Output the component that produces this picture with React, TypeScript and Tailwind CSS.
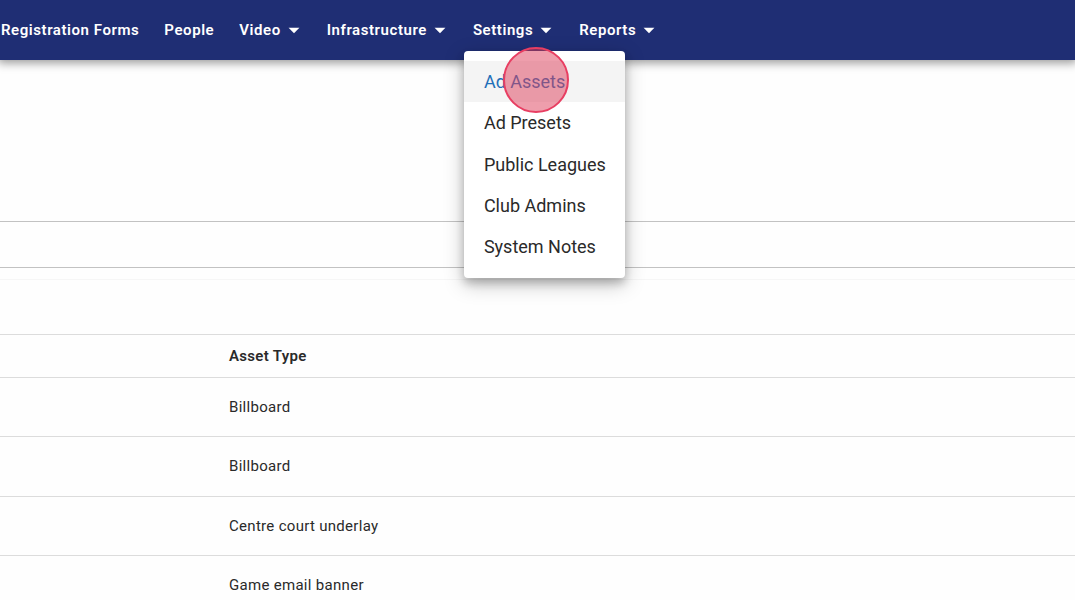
import { MdArrowDropDown } from "react-icons/md";

const navItems = [
    { label: "Registration Forms", menu: false },
    { label: "People", menu: false },
    { label: "Video", menu: true },
    { label: "Infrastructure", menu: true },
    { label: "Settings", menu: true },
    { label: "Reports", menu: true },
];

const settingsItems = ["Ad Assets", "Ad Presets", "Public Leagues", "Club Admins", "System Notes"];

const assets = ["Billboard", "Billboard", "Centre court underlay", "Game email banner"];

function SettingsMenu() {
    return (
        <ul className="absolute top-[51px] -left-[9px] z-20 flex h-[227px] w-[161px] flex-col rounded bg-white py-[10px] text-lg font-normal tracking-normal shadow-[0_5px_8px_rgba(0,0,0,0.2),0_6px_20px_rgba(0,0,0,0.25)]">
            {settingsItems.map((item, i) => (
                <li key={item} className="relative flex flex-1">
                    <a
                        href="#"
                        className={`flex flex-1 items-center px-5 whitespace-nowrap ${
                            i === 0 ? "bg-[#f4f4f4] text-[#1f6fb8]" : "text-[#2a2a2a]"
                        }`}
                    >
                        {item}
                    </a>
                    {/* Click marker */}
                    {i === 0 && (
                        <span className="pointer-events-none absolute -top-[14px] left-[39px] size-[66px] rounded-full border-2 border-[#e83e62] bg-[#dd3d5a]/50" />
                    )}
                </li>
            ))}
        </ul>
    );
}

function NavBar() {
    return (
        <header className="relative z-10 bg-[#1f2e74] shadow-[0_1px_9px_2px_rgba(0,0,0,0.4)]">
            <nav>
                <ul className="flex h-[60px] gap-[25px] pl-px text-[15px] font-semibold tracking-[0.0375em] text-white">
                    {navItems.map(({ label, menu }) => (
                        <li key={label} className="relative flex items-center">
                            {menu ? (
                                <button className="-mr-[5px] flex items-center whitespace-nowrap">
                                    {label}
                                    <MdArrowDropDown className="size-[26px]" />
                                </button>
                            ) : (
                                <a href="#" className="whitespace-nowrap">
                                    {label}
                                </a>
                            )}
                            {label === "Settings" && <SettingsMenu />}
                        </li>
                    ))}
                </ul>
            </nav>
        </header>
    );
}

export default function App() {
    return (
        <div className="min-h-screen overflow-hidden bg-[#fefefe] font-['Roboto',sans-serif] text-[#2a2a2a]">
            <NavBar />
            <main className="pt-[161px]">
                <input
                    type="text"
                    aria-label="Search assets"
                    className="block h-[47px] w-full border-y border-[#c2c2c2] px-4 outline-none"
                />
                <div className="mt-[11px] border-t border-[#f6f6f6] pt-[54px]">
                    <table className="w-full border-collapse text-left text-[15px] tracking-[0.02em]">
                        <thead>
                            <tr className="h-[43px] border-y border-[#dcdcdc]">
                                <th className="pl-[229px] font-semibold">Asset Type</th>
                            </tr>
                        </thead>
                        <tbody>
                            {assets.map((type, i) => (
                                <tr key={i} className="h-[59px] border-b border-[#dcdcdc] even:h-[60px]">
                                    <td className="pl-[229px]">{type}</td>
                                </tr>
                            ))}
                        </tbody>
                    </table>
                </div>
            </main>
        </div>
    );
}
